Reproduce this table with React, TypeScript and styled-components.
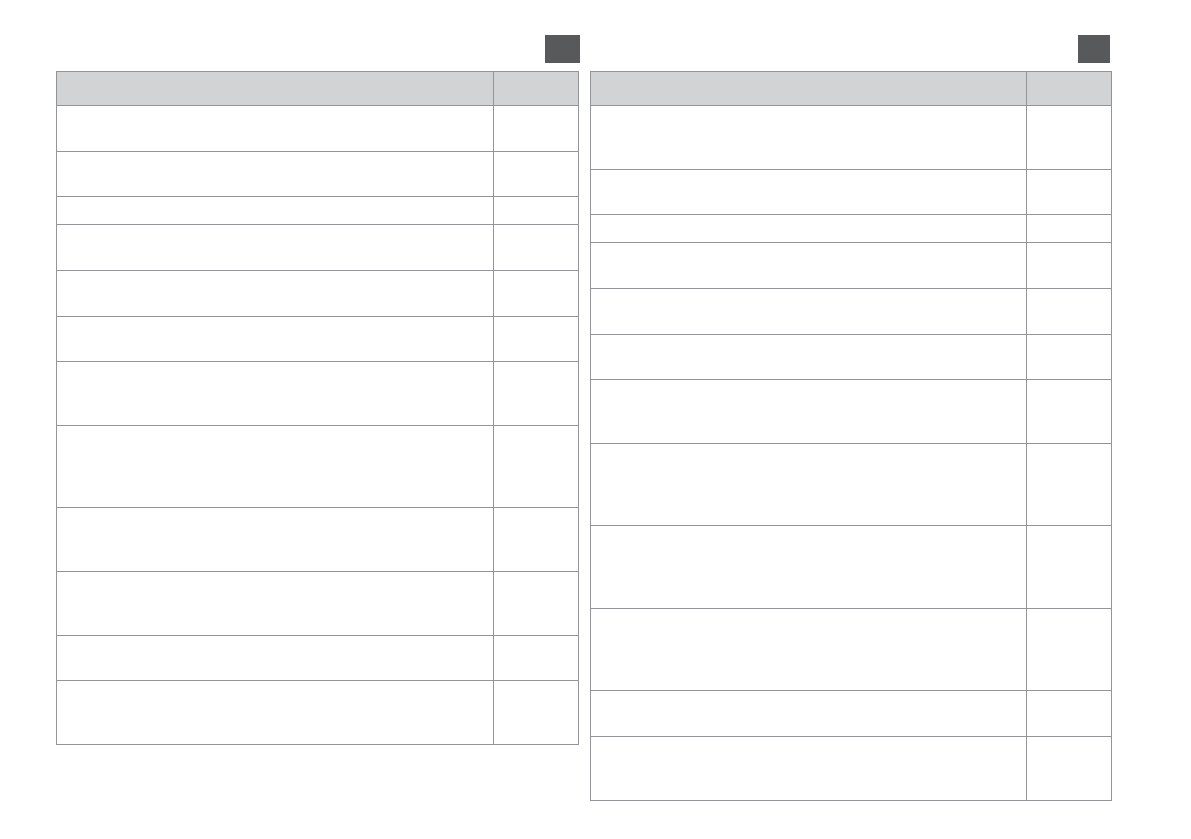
import React from 'react';
import styled, { createGlobalStyle } from 'styled-components';

const GlobalStyle = createGlobalStyle`
  html, body {
    margin: 0;
    padding: 0;
    background: #ffffff;
    font-family: "Liberation Sans", Arial, sans-serif;
  }
`;

// row heights (px, each including its bottom rule), header first
const leftRows = [34, 46, 45, 28, 46, 46, 45, 64, 82, 64, 64, 45, 64];
const rightRows = [34, 64, 45, 28, 46, 46, 45, 64, 82, 83, 82, 46, 64];

const Page = styled.div`
  display: flex;
  align-items: flex-start;
  gap: 11px;
  padding: 35px 0 0 56px;
`;

const Panel = styled.section<{ $width: number }>`
  display: flex;
  flex-direction: column;
  width: ${(p) => p.$width}px;
`;

const Tab = styled.div<{ $w: number; $inset: number }>`
  align-self: flex-end;
  width: ${(p) => p.$w}px;
  height: 28px;
  margin-right: ${(p) => p.$inset}px;
  margin-bottom: 8px;
  background: #58595b;
`;

const Table = styled.div`
  display: grid;
  grid-template-columns: 1fr 85px;
  border-top: 1px solid #939598;
  border-left: 1px solid #939598;
`;

const Cell = styled.div<{ $head?: boolean }>`
  box-sizing: border-box;
  border-right: 1px solid #939598;
  border-bottom: 1px solid #939598;
  background: ${(p) => (p.$head ? '#d1d3d4' : '#ffffff')};
`;

interface SheetProps {
  width: number;
  tabWidth: number;
  tabInset: number;
  rows: number[];
}

const Sheet: React.FC<SheetProps> = ({ width, tabWidth, tabInset, rows }) => (
  <Panel $width={width}>
    <Tab $w={tabWidth} $inset={tabInset} />
    <Table>
      {rows.map((h, i) => (
        <React.Fragment key={i}>
          <Cell $head={i === 0} style={{ height: h }} />
          <Cell $head={i === 0} style={{ height: h }} />
        </React.Fragment>
      ))}
    </Table>
  </Panel>
);

export default function App() {
  return (
    <>
      <GlobalStyle />
      <Page>
        <Sheet width={523} tabWidth={35} tabInset={-1} rows={leftRows} />
        <Sheet width={522} tabWidth={32} tabInset={2} rows={rightRows} />
      </Page>
    </>
  );
}
